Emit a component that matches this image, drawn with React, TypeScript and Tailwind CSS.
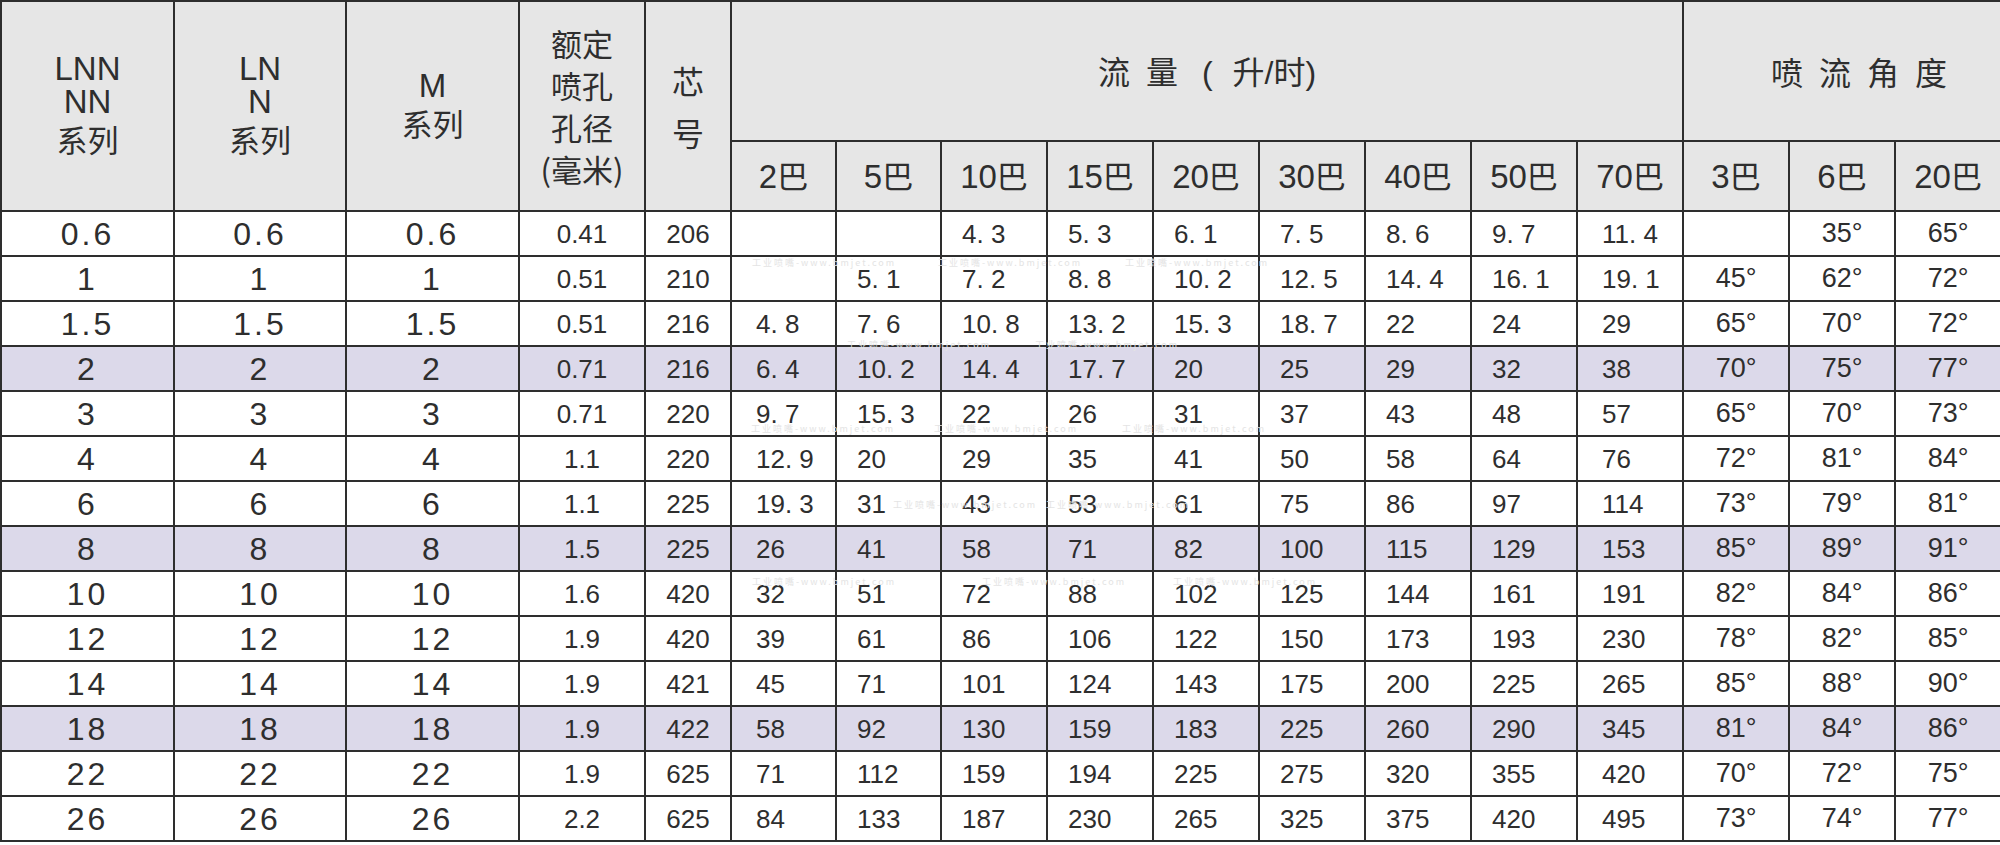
import React from "react";

type Row = {
  size: string;
  dia: string;
  core: string;
  flow: string[];
  angle: string[];
  mark?: boolean;
};

const rows: Row[] = [
  { size: "0.6", dia: "0.41", core: "206", flow: ["", "", "4. 3", "5. 3", "6. 1", "7. 5", "8. 6", "9. 7", "11. 4"], angle: ["", "35°", "65°"] },
  { size: "1", dia: "0.51", core: "210", flow: ["", "5. 1", "7. 2", "8. 8", "10. 2", "12. 5", "14. 4", "16. 1", "19. 1"], angle: ["45°", "62°", "72°"] },
  { size: "1.5", dia: "0.51", core: "216", flow: ["4. 8", "7. 6", "10. 8", "13. 2", "15. 3", "18. 7", "22", "24", "29"], angle: ["65°", "70°", "72°"] },
  { size: "2", dia: "0.71", core: "216", flow: ["6. 4", "10. 2", "14. 4", "17. 7", "20", "25", "29", "32", "38"], angle: ["70°", "75°", "77°"], mark: true },
  { size: "3", dia: "0.71", core: "220", flow: ["9. 7", "15. 3", "22", "26", "31", "37", "43", "48", "57"], angle: ["65°", "70°", "73°"] },
  { size: "4", dia: "1.1", core: "220", flow: ["12. 9", "20", "29", "35", "41", "50", "58", "64", "76"], angle: ["72°", "81°", "84°"] },
  { size: "6", dia: "1.1", core: "225", flow: ["19. 3", "31", "43", "53", "61", "75", "86", "97", "114"], angle: ["73°", "79°", "81°"] },
  { size: "8", dia: "1.5", core: "225", flow: ["26", "41", "58", "71", "82", "100", "115", "129", "153"], angle: ["85°", "89°", "91°"], mark: true },
  { size: "10", dia: "1.6", core: "420", flow: ["32", "51", "72", "88", "102", "125", "144", "161", "191"], angle: ["82°", "84°", "86°"] },
  { size: "12", dia: "1.9", core: "420", flow: ["39", "61", "86", "106", "122", "150", "173", "193", "230"], angle: ["78°", "82°", "85°"] },
  { size: "14", dia: "1.9", core: "421", flow: ["45", "71", "101", "124", "143", "175", "200", "225", "265"], angle: ["85°", "88°", "90°"] },
  { size: "18", dia: "1.9", core: "422", flow: ["58", "92", "130", "159", "183", "225", "260", "290", "345"], angle: ["81°", "84°", "86°"], mark: true },
  { size: "22", dia: "1.9", core: "625", flow: ["71", "112", "159", "194", "225", "275", "320", "355", "420"], angle: ["70°", "72°", "75°"] },
  { size: "26", dia: "2.2", core: "625", flow: ["84", "133", "187", "230", "265", "325", "375", "420", "495"], angle: ["73°", "74°", "77°"] },
];

const flowHeads = ["2巴", "5巴", "10巴", "15巴", "20巴", "30巴", "40巴", "50巴", "70巴"];
const angleHeads = ["3巴", "6巴", "20巴"];

// faint site watermarks scattered over the flow columns
const marks = [
  { x: 752, y: 258 }, { x: 938, y: 258 }, { x: 1125, y: 258 },
  { x: 847, y: 340 }, { x: 1035, y: 340 },
  { x: 751, y: 424 }, { x: 934, y: 424 }, { x: 1122, y: 424 },
  { x: 893, y: 500 }, { x: 1046, y: 500 },
  { x: 752, y: 577 }, { x: 982, y: 577 }, { x: 1173, y: 577 },
];

const cell = "border-2 border-[#2e2e2e] p-0 leading-none";
const head = `${cell} bg-[#e6e6e6] text-center align-middle`;

export default function App() {
  return (
    <div className="relative w-[2000px] h-[845px] bg-white text-[#2e2e2e] font-['Liberation_Sans','Noto_Sans_CJK_SC',sans-serif] overflow-hidden">
      <table className="table-fixed border-collapse w-[2000px]">
        <colgroup>
          <col className="w-[173px]" />
          <col className="w-[172px]" />
          <col className="w-[173px]" />
          <col className="w-[126px]" />
          <col className="w-[86px]" />
          {[...flowHeads, ...angleHeads].map((h, i) => (
            <col key={i} className={i < 2 ? "w-[105px]" : "w-[106px]"} />
          ))}
        </colgroup>
        <thead>
          <tr className="h-[140px]">
            <th rowSpan={2} className={`${head} font-normal`}>
              <div className="text-[33px] leading-[33px]">LNN</div>
              <div className="text-[33px] leading-[33px]">NN</div>
              <div className="text-[31px] leading-[42px] font-['Noto_Sans_CJK_SC',sans-serif]">系列</div>
            </th>
            <th rowSpan={2} className={`${head} font-normal`}>
              <div className="text-[33px] leading-[33px]">LN</div>
              <div className="text-[33px] leading-[33px]">N</div>
              <div className="text-[31px] leading-[42px] font-['Noto_Sans_CJK_SC',sans-serif]">系列</div>
            </th>
            <th rowSpan={2} className={`${head} font-normal`}>
              <div className="text-[33px] leading-[33px]">M</div>
              <div className="text-[31px] leading-[42px] font-['Noto_Sans_CJK_SC',sans-serif]">系列</div>
            </th>
            <th rowSpan={2} className={`${head} font-normal`}>
              <div className="text-[31px] leading-[42px] font-['Noto_Sans_CJK_SC',sans-serif]">
                <div>额定</div>
                <div>喷孔</div>
                <div>孔径</div>
                <div>(毫米)</div>
              </div>
            </th>
            <th rowSpan={2} className={`${head} font-normal`}>
              <div className="text-[32px] leading-[52px] font-['Noto_Sans_CJK_SC',sans-serif]">
                <div>芯</div>
                <div>号</div>
              </div>
            </th>
            <th colSpan={9} className={`${head} font-normal text-[32px]`}>
              <span className="font-['Noto_Sans_CJK_SC',sans-serif]">流</span>
              <span className="ml-[16px] font-['Noto_Sans_CJK_SC',sans-serif]">量</span>
              <span className="ml-[24px]">(</span>
              <span className="ml-[20px] font-['Noto_Sans_CJK_SC',sans-serif]">升</span>
              <span>/</span>
              <span className="font-['Noto_Sans_CJK_SC',sans-serif]">时</span>
              <span>)</span>
            </th>
            <th colSpan={3} className={`${head} font-normal text-[32px] pl-[50px] tracking-[16px] font-['Noto_Sans_CJK_SC',sans-serif]`}>
              喷流角度
            </th>
          </tr>
          <tr className="h-[70px]">
            {[...flowHeads, ...angleHeads].map((h, i) => (
              <th key={i} className={`${head} font-normal text-[33px] whitespace-nowrap`}>
                {h.replace("巴", "")}
                <span className="text-[31px] font-['Noto_Sans_CJK_SC',sans-serif]">巴</span>
              </th>
            ))}
          </tr>
        </thead>
        <tbody>
          {rows.map((r, ri) => (
            <tr key={ri} className={`h-[45px] ${r.mark ? "bg-[#dcd9ea]" : "bg-white"}`}>
              <td className={`${cell} text-center text-[32px] tracking-[3px]`}>{r.size}</td>
              <td className={`${cell} text-center text-[32px] tracking-[3px]`}>{r.size}</td>
              <td className={`${cell} text-center text-[32px] tracking-[3px]`}>{r.size}</td>
              <td className={`${cell} text-center text-[26px]`}>{r.dia}</td>
              <td className={`${cell} text-center text-[26px]`}>{r.core}</td>
              {r.flow.map((v, i) => (
                <td
                  key={i}
                  className={`${cell} text-left text-[26px] whitespace-pre ${i === 0 || i === 8 ? "pl-[24px]" : "pl-[20px]"}`}
                >
                  {v}
                </td>
              ))}
              {r.angle.map((v, i) => (
                <td key={i} className={`${cell} text-center text-[27px]`}>
                  {v}
                </td>
              ))}
            </tr>
          ))}
        </tbody>
      </table>
      {marks.map((m, i) => (
        <span
          key={i}
          className="absolute text-[9px] leading-none tracking-[2px] text-[#e4e4e4] whitespace-nowrap pointer-events-none font-['Noto_Sans_CJK_SC',sans-serif]"
          style={{ left: m.x, top: m.y }}
        >
          工业喷嘴-www.bmjet.com
        </span>
      ))}
    </div>
  );
}
